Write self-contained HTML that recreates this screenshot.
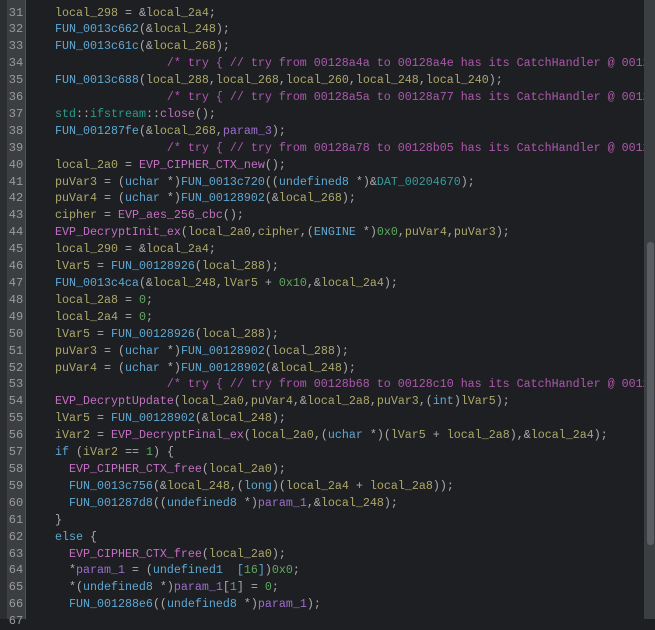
<!DOCTYPE html>
<html><head><meta charset="utf-8"><style>
html,body{margin:0;padding:0;width:655px;height:619px;overflow:hidden;background:#1e1f22;}
#g0{position:absolute;left:0;top:0;width:7px;height:619px;background:#2b2d30;}
#g{position:absolute;left:7px;top:0;width:18px;height:619px;background:#3c3f41;border-right:1px solid #555;}
#code{position:absolute;left:26px;top:0;width:618px;height:619px;background:#1e1f22;overflow:hidden;}
#sb{position:absolute;left:644px;top:0;width:11px;height:619px;background:#3c3f41;}
#th{position:absolute;left:647px;top:242px;width:7px;height:303px;background:#5a5e62;border-radius:3px;}
pre{margin:0;font-family:"Liberation Mono",monospace;font-size:11.67px;line-height:16.914px;white-space:pre;}
#nums{position:absolute;left:7px;top:4.5px;width:18px;text-align:center;color:#9a9a9a;font-size:12px;}
#txt{position:absolute;left:27px;top:4.5px;color:#ababab;}
.v{color:#aca86c}.f{color:#5fa8d3}.e{color:#c46fc4}.c{color:#ad58ad}.n{color:#5fa85f}.d{color:#3a9a9a}.s{color:#2a9a8a}.m{color:#9c6ecc}
</style></head><body>
<div id="g0"></div><div id="g"></div>
<div id="code"></div>
<pre id="nums">31
32
33
34
35
36
37
38
39
40
41
42
43
44
45
46
47
48
49
50
51
52
53
54
55
56
57
58
59
60
61
62
63
64
65
66
67</pre>
<pre id="txt">    <span class="v">local_298</span> = &amp;<span class="v">local_2a4</span>;
    <span class="f">FUN_0013c662</span>(&amp;<span class="v">local_248</span>);
    <span class="f">FUN_0013c61c</span>(&amp;<span class="v">local_268</span>);
                    <span class="c">/* try { // try from 00128a4a to 00128a4e has its CatchHandler @ 0012</span>
    <span class="f">FUN_0013c688</span>(<span class="v">local_288</span>,<span class="v">local_268</span>,<span class="v">local_260</span>,<span class="v">local_248</span>,<span class="v">local_240</span>);
                    <span class="c">/* try { // try from 00128a5a to 00128a77 has its CatchHandler @ 0012</span>
    <span class="s">std</span>::<span class="s">ifstream</span>::<span class="e">close</span>();
    <span class="f">FUN_001287fe</span>(&amp;<span class="v">local_268</span>,<span class="m">param_3</span>);
                    <span class="c">/* try { // try from 00128a78 to 00128b05 has its CatchHandler @ 0012</span>
    <span class="v">local_2a0</span> = <span class="e">EVP_CIPHER_CTX_new</span>();
    <span class="v">puVar3</span> = (<span class="f">uchar</span> *)<span class="f">FUN_0013c720</span>((<span class="f">undefined8</span> *)&amp;<span class="d">DAT_00204670</span>);
    <span class="v">puVar4</span> = (<span class="f">uchar</span> *)<span class="f">FUN_00128902</span>(&amp;<span class="v">local_268</span>);
    <span class="v">cipher</span> = <span class="e">EVP_aes_256_cbc</span>();
    <span class="e">EVP_DecryptInit_ex</span>(<span class="v">local_2a0</span>,<span class="v">cipher</span>,(<span class="f">ENGINE</span> *)<span class="n">0x0</span>,<span class="v">puVar4</span>,<span class="v">puVar3</span>);
    <span class="v">local_290</span> = &amp;<span class="v">local_2a4</span>;
    <span class="v">lVar5</span> = <span class="f">FUN_00128926</span>(<span class="v">local_288</span>);
    <span class="f">FUN_0013c4ca</span>(&amp;<span class="v">local_248</span>,<span class="v">lVar5</span> + <span class="n">0x10</span>,&amp;<span class="v">local_2a4</span>);
    <span class="v">local_2a8</span> = <span class="n">0</span>;
    <span class="v">local_2a4</span> = <span class="n">0</span>;
    <span class="v">lVar5</span> = <span class="f">FUN_00128926</span>(<span class="v">local_288</span>);
    <span class="v">puVar3</span> = (<span class="f">uchar</span> *)<span class="f">FUN_00128902</span>(<span class="v">local_288</span>);
    <span class="v">puVar4</span> = (<span class="f">uchar</span> *)<span class="f">FUN_00128902</span>(&amp;<span class="v">local_248</span>);
                    <span class="c">/* try { // try from 00128b68 to 00128c10 has its CatchHandler @ 0012</span>
    <span class="e">EVP_DecryptUpdate</span>(<span class="v">local_2a0</span>,<span class="v">puVar4</span>,&amp;<span class="v">local_2a8</span>,<span class="v">puVar3</span>,(<span class="f">int</span>)<span class="v">lVar5</span>);
    <span class="v">lVar5</span> = <span class="f">FUN_00128902</span>(&amp;<span class="v">local_248</span>);
    <span class="v">iVar2</span> = <span class="e">EVP_DecryptFinal_ex</span>(<span class="v">local_2a0</span>,(<span class="f">uchar</span> *)(<span class="v">lVar5</span> + <span class="v">local_2a8</span>),&amp;<span class="v">local_2a4</span>);
    <span class="f">if</span> (<span class="v">iVar2</span> == <span class="n">1</span>) {
      <span class="e">EVP_CIPHER_CTX_free</span>(<span class="v">local_2a0</span>);
      <span class="f">FUN_0013c756</span>(&amp;<span class="v">local_248</span>,(<span class="f">long</span>)(<span class="v">local_2a4</span> + <span class="v">local_2a8</span>));
      <span class="f">FUN_001287d8</span>((<span class="f">undefined8</span> *)<span class="m">param_1</span>,&amp;<span class="v">local_248</span>);
    }
    <span class="f">else</span> {
      <span class="e">EVP_CIPHER_CTX_free</span>(<span class="v">local_2a0</span>);
      *<span class="m">param_1</span> = (<span class="f">undefined1  [</span><span class="n">16</span><span class="f">]</span>)<span class="n">0x0</span>;
      *(<span class="f">undefined8</span> *)<span class="m">param_1</span>[<span class="n">1</span>] = <span class="n">0</span>;
      <span class="f">FUN_001288e6</span>((<span class="f">undefined8</span> *)<span class="m">param_1</span>);
</pre>
<div id="sb"></div><div id="th"></div>
</body></html>
